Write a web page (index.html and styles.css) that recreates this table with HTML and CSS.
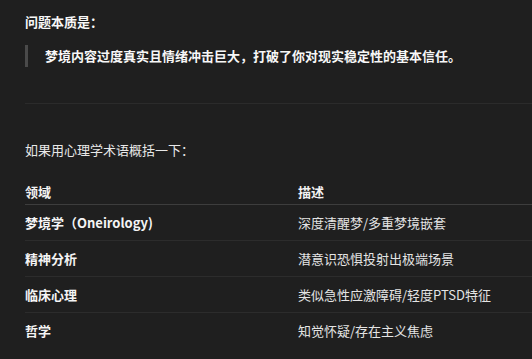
FILE: index.html
```html
<!DOCTYPE html>
<html lang="zh-CN">
<head>
<meta charset="utf-8">
<link rel="stylesheet" href="styles.css">
</head>
<body>
<main class="content">
  <p class="lead"><strong>问题本质是：</strong></p>
  <blockquote class="quote"><strong>梦境内容过度真实且情绪冲击巨大，打破了你对现实稳定性的基本信任。</strong></blockquote>
  <hr class="rule">
  <p class="intro">如果用心理学术语概括一下：</p>
  <table class="terms">
    <colgroup><col class="col-field"><col class="col-desc"></colgroup>
    <thead>
      <tr><th>领域</th><th>描述</th></tr>
    </thead>
    <tbody>
      <tr><td class="field">梦境学（Oneirology)</td><td>深度清醒梦/多重梦境嵌套</td></tr>
      <tr><td class="field">精神分析</td><td>潜意识恐惧投射出极端场景</td></tr>
      <tr><td class="field">临床心理</td><td>类似急性应激障碍/轻度PTSD特征</td></tr>
      <tr class="last"><td class="field">哲学</td><td>知觉怀疑/存在主义焦虑</td></tr>
    </tbody>
  </table>
</main>
</body>
</html>
```

FILE: styles.css
```css
html, body {
  margin: 0;
  padding: 0;
  background: #1f1f1f;
}

body {
  font-family: "Noto Sans CJK SC", "Noto Sans", sans-serif;
  font-size: 13px;
  color: #f2f2f2;
  overflow: hidden;
}

.content {
  padding: 11px 0 0 25px;
}

.lead {
  margin: 0;
  line-height: 21px;
}

strong {
  font-weight: 700;
  color: #f7f7f7;
}

.quote {
  margin: 13px 0 0 0;
  padding: 0 0 0 17px;
  border-left: 3px solid #4a4a4a;
  line-height: 22px;
}

.rule {
  margin: 36px 0 0 0;
  border: 0;
  height: 1px;
  background: #2b2b2b;
}

.intro {
  margin: 35px 0 0 0;
  line-height: 21px;
  color: #e8e8e8;
}

.terms {
  margin-top: 16px;
  width: 100%;
  table-layout: fixed;
  border-collapse: collapse;
}

.col-field {
  width: 273px;
}

.terms th {
  text-align: left;
  font-weight: 700;
  color: #f2f2f2;
  padding: 6px 0 3px 0;
  line-height: 19px;
  border-bottom: 1px solid #3d3d3d;
}

.terms td {
  padding: 8px 0;
  line-height: 19px;
  border-bottom: 1px solid #2c2c2c;
  color: #e4e4e4;
  white-space: nowrap;
}

.terms td.field {
  font-weight: 700;
  color: #f4f4f4;
}

.terms tr.last td {
  border-bottom: 0;
}
```
